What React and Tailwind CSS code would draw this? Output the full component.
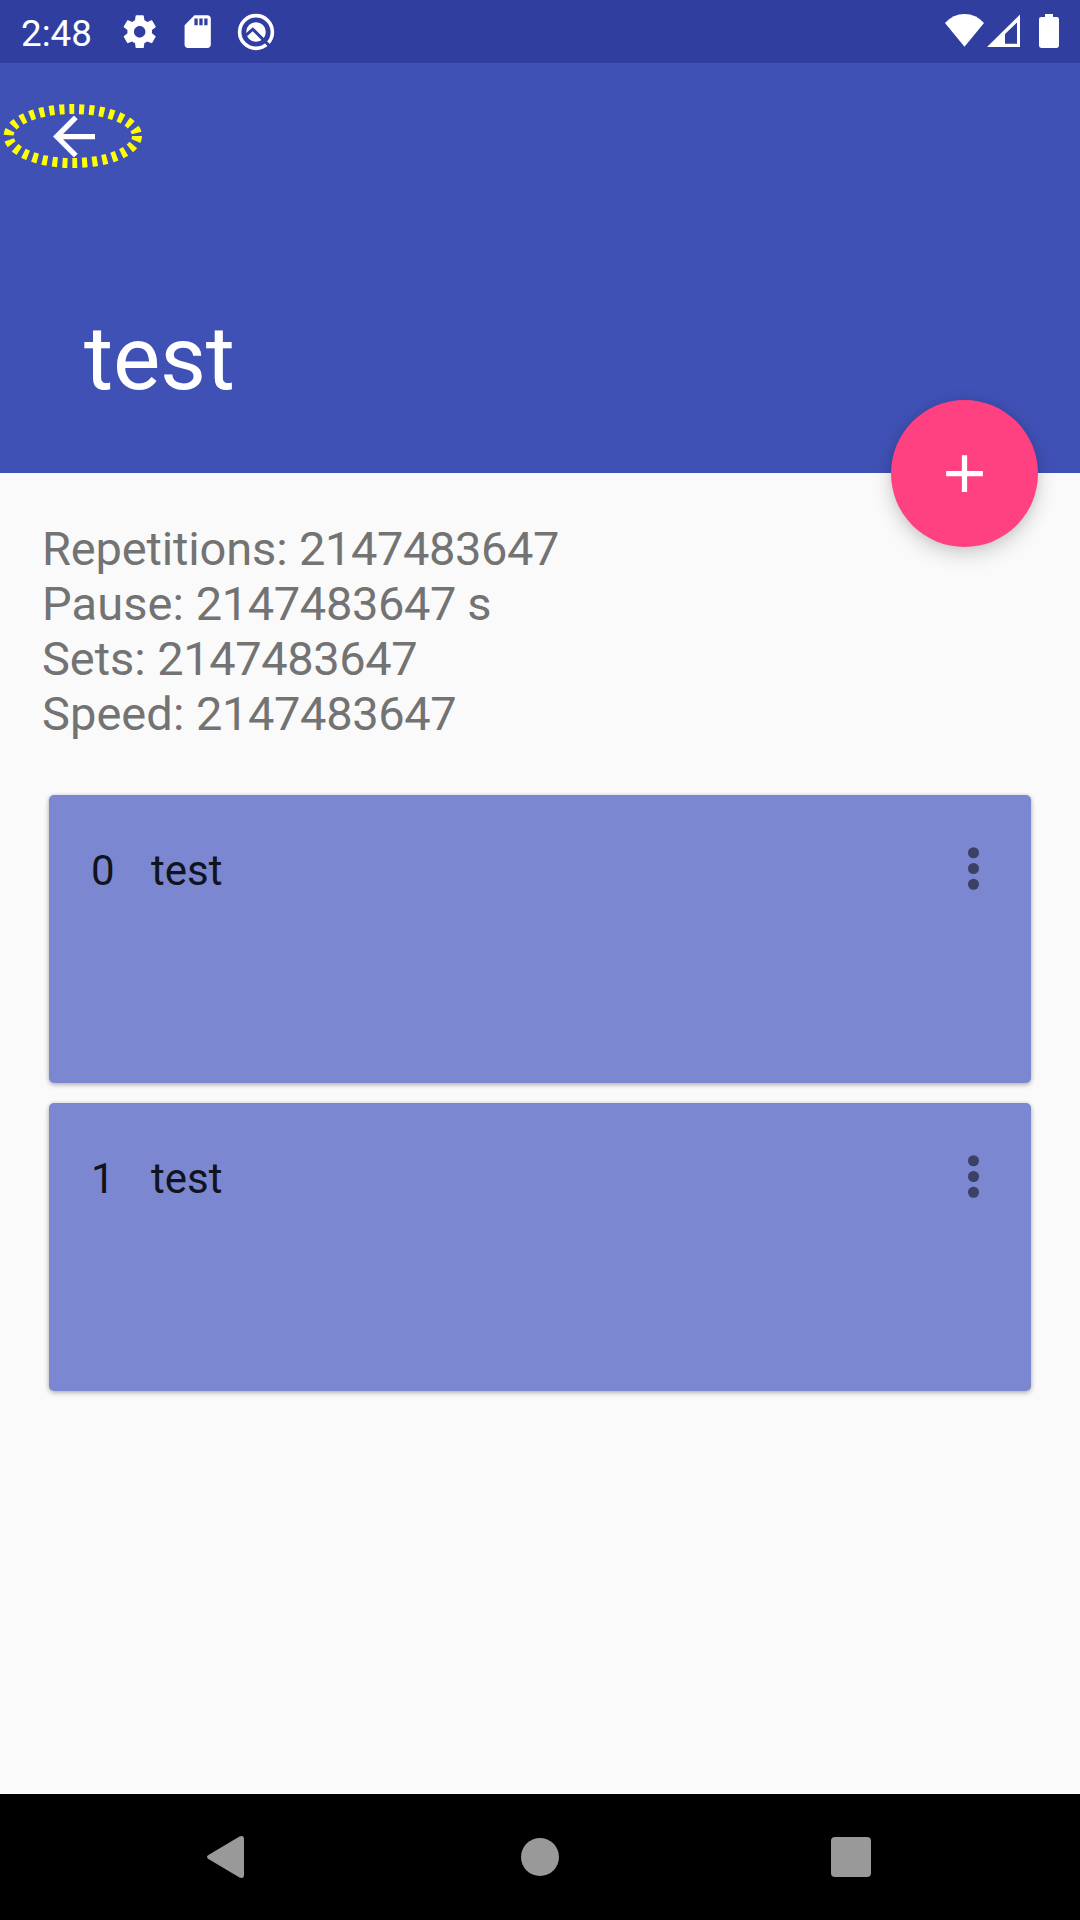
import React from 'react';

const details = [
  { label: 'Repetitions:', value: '2147483647', tracking: 'tracking-[-0.15px]' },
  { label: 'Pause:', value: '2147483647 s', tracking: 'tracking-[0.1px]' },
  { label: 'Sets:', value: '2147483647', tracking: 'tracking-[-0.05px]' },
  { label: 'Speed:', value: '2147483647', tracking: 'tracking-[0.05px]' },
];
const exercises = [
  { index: 0, name: 'test' },
  { index: 1, name: 'test' },
];

function StatusBar() {
  return (
    <div className="flex h-[63px] items-center justify-between bg-[#303f9f] pl-[21px] pr-[21px]">
      <div className="flex h-full items-center">
        <span className="w-[99px] pt-[3px] text-[36.75px] leading-[43px]">2:48</span>
        <svg className="h-[39.4px] w-[39.4px]" viewBox="0 0 24 24" fill="currentColor">
          <path d="M19.43 12.98c.04-.32.07-.64.07-.98s-.03-.66-.07-.98l2.11-1.65c.19-.15.24-.42.12-.64l-2-3.46c-.12-.22-.39-.3-.61-.22l-2.49 1c-.52-.4-1.08-.73-1.69-.98l-.38-2.65C14.46 2.18 14.25 2 14 2h-4c-.25 0-.46.18-.49.42l-.38 2.65c-.61.25-1.17.59-1.69.98l-2.49-1c-.23-.09-.49 0-.61.22l-2 3.46c-.13.22-.07.49.12.64l2.11 1.65c-.04.32-.07.65-.07.98s.03.66.07.98l-2.11 1.65c-.19.15-.24.42-.12.64l2 3.46c.12.22.39.3.61.22l2.49-1c.52.4 1.08.73 1.69.98l.38 2.65c.03.24.24.42.49.42h4c.25 0 .46-.18.49-.42l.38-2.65c.61-.25 1.17-.59 1.69-.98l2.49 1c.23.09.49 0 .61-.22l2-3.46c.12-.22.07-.49-.12-.64l-2.11-1.65zM12 15.5c-1.93 0-3.5-1.57-3.5-3.5s1.57-3.5 3.5-3.5 3.5 1.57 3.5 3.5-1.57 3.5-3.5 3.5z" />
        </svg>
        <svg className="ml-[18.6px] h-[39.4px] w-[39.4px]" viewBox="0 0 24 24" fill="currentColor">
          <path d="M18 2h-8L4.02 8 4 20c0 1.1.9 2 2 2h12c1.1 0 2-.9 2-2V4c0-1.1-.9-2-2-2zm-6 6h-2V4h2v4zm3 0h-2V4h2v4zm3 0h-2V4h2v4z" />
        </svg>
        <svg className="ml-[18.2px] h-[40px] w-[40px]" viewBox="0 0 40 40" fill="none">
          <circle cx="20" cy="20" r="16.4" stroke="currentColor" strokeWidth="3.6" />
          <circle cx="20" cy="20" r="9.8" fill="currentColor" />
          <path d="M10 23.2 16.8 17.2 34 34.4" stroke="#303f9f" strokeWidth="3" />
        </svg>
      </div>
      <svg className="h-[63px] w-[120px]" viewBox="939 0 120 63" fill="currentColor">
        <path d="M964.5 46.8 945 23Q953 14 964.5 14T984 23Z" />
        <path fillRule="evenodd" d="M987 47 1020 14.5V47ZM1005 43.7H1017V22.5L1005 34Z" />
        <path d="M1045 17V14H1053V17H1056.8Q1059 17 1059 19.2V45.6Q1059 48 1056.8 48H1041.3Q1039 48 1039 45.6V19.2Q1039 17 1041.3 17Z" />
      </svg>
    </div>
  );
}

function AppBar() {
  return (
    <header className="relative h-[410px] bg-[#3f51b5] pt-[31px]">
      <button className="flex h-[84px] w-[145px] items-center" aria-label="Back">
        <svg className="h-[84px] w-[145px]" viewBox="0 94 145 84" fill="none">
          <ellipse cx="72.8" cy="136" rx="64.2" ry="27" stroke="#ffff00" strokeWidth="10" strokeDasharray="5 5" />
          <path transform="translate(42.5 105) scale(2.625)" fill="#fff" d="M20 11H7.83l5.59-5.59L12 4l-8 8 8 8 1.41-1.41L7.83 13H20v-2z" />
        </svg>
      </button>
      <h1 className="mt-[129px] pl-[84px] text-[89.25px] font-normal leading-[104px] tracking-[-0.3px]">test</h1>
      <button
        className="absolute -bottom-[74px] right-[42px] flex h-[147px] w-[147px] items-center justify-center rounded-full bg-[#ff4081] shadow-[0_7px_20px_rgba(0,0,0,0.18),0_0_8px_rgba(0,0,0,0.07)]"
        aria-label="Add exercise"
      >
        <svg className="h-[63px] w-[63px]" viewBox="0 0 24 24" fill="#fff">
          <path d="M19 13h-6v6h-2v-6H5v-2h6V5h2v6h6v2z" />
        </svg>
      </button>
    </header>
  );
}

function ExerciseCard({ index, name }) {
  return (
    <li className="flex h-[288px] items-start rounded-[5px] bg-[#7b87d0] pl-[42px] pt-[51px] text-[42px] leading-[49px] text-[#11131d] shadow-[0_2px_5px_rgba(0,0,0,0.25),0_0_4px_rgba(0,0,0,0.10)]">
      <span className="w-[60px]">{index}</span>
      <span className="flex-1">{name}</span>
      <svg className="-mt-[9px] mr-[26px] h-[63px] w-[63px]" viewBox="0 0 24 24" fill="#3a4165">
        <circle cx="12" cy="6" r="2.1" />
        <circle cx="12" cy="12" r="2.1" />
        <circle cx="12" cy="18" r="2.1" />
      </svg>
    </li>
  );
}

function NavigationBar() {
  return (
    <nav className="flex h-[126px] items-center bg-black pl-[206px] text-[#999999]">
      <svg className="h-[44px] w-[40px]" viewBox="0 0 40 44" fill="currentColor">
        <path d="M2 20.3 33.5 1.5Q38 0 38 4V40Q38 44 33.5 42.5L2 23.7Q0 22 2 20.3Z" />
      </svg>
      <span className="ml-[275px] h-[38px] w-[38px] rounded-full bg-[#999999]" />
      <span className="ml-[272px] h-[40px] w-[40px] rounded-[4px] bg-[#999999]" />
    </nav>
  );
}

export default function App() {
  return (
    <div className="flex h-[1920px] w-[1080px] flex-col overflow-hidden bg-[#fafafa] font-[Roboto,sans-serif] text-white">
      <StatusBar />
      <AppBar />
      <main className="flex-1 pt-[48px]">
        <div className="pl-[42px] text-[47px] leading-[55px] text-[#737373]">
          {details.map(({ label, value, tracking }) => (
            <p key={label}>
              <span className={tracking}>{label} </span>
              <span className="tracking-[-0.4px]">{value}</span>
            </p>
          ))}
        </div>
        <ul className="mx-[49px] mt-[54px] flex flex-col gap-[20px]">
          {exercises.map((exercise) => (
            <ExerciseCard key={exercise.index} {...exercise} />
          ))}
        </ul>
      </main>
      <NavigationBar />
    </div>
  );
}
